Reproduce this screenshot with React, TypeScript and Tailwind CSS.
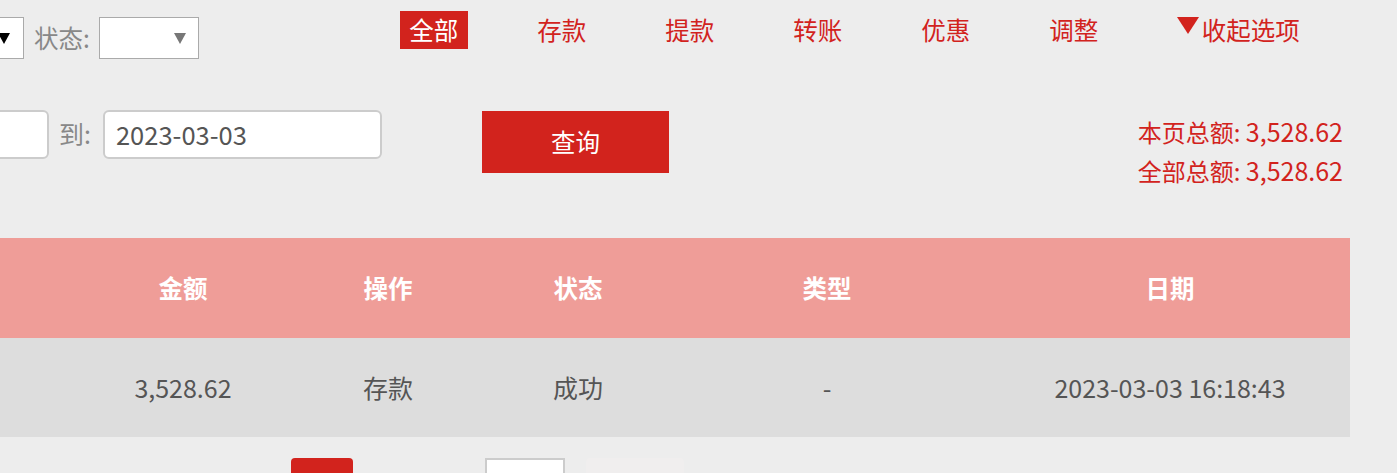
import React from 'react'

const font = { fontFamily: '"Microsoft YaHei", "Noto Sans CJK SC", "Noto Sans", sans-serif' }

const tabs = ['存款', '提款', '转账', '优惠', '调整']

const cols = [
  { w: 'w-[82px]', head: '', val: '' },
  { w: 'w-[202px]', head: '金额', val: '3,528.62' },
  { w: 'w-[208px]', head: '操作', val: '存款' },
  { w: 'w-[172px]', head: '状态', val: '成功' },
  { w: 'w-[326px]', head: '类型', val: '-' },
  { w: 'w-[360px]', head: '日期', val: '2023-03-03 16:18:43' },
]

function Arrow({ color }: { color: string }) {
  return (
    <svg width="12" height="11" viewBox="0 0 12 11">
      <path d="M0 0 H12 L6 11 Z" fill={color} />
    </svg>
  )
}

export default function App() {
  return (
    <div className="w-[1397px] h-[473px] bg-[#ededed] overflow-hidden text-[24px]" style={font}>
      {/* filters top row */}
      <div className="flex items-start h-[90px]">
        <div className="flex items-center mt-[17px]">
          <div className="ml-[-76px] w-[100px] h-[42px] bg-white border border-[#aaa] flex items-center justify-end pr-[13px]">
            <Arrow color="#000" />
          </div>
          <span className="ml-[10px] text-[#888] text-[24.5px] leading-none">状态:</span>
          <div className="ml-[9px] w-[100px] h-[42px] bg-white border border-[#aaa] flex items-center justify-end pr-[12px]">
            <Arrow color="#777" />
          </div>
        </div>
        <div className="flex items-center gap-[60px] ml-[201px] mt-[11px] text-[24.5px]">
          <div className="h-[38px] w-[68px] bg-[#d2231d] text-white flex items-center justify-center leading-none">全部</div>
          {tabs.map((t) => (
            <div key={t} className="h-[38px] w-[68px] text-[#d2231d] flex items-center justify-center leading-none">{t}</div>
          ))}
          <div className="h-[38px] px-[9px] text-[#d2231d] flex items-center leading-none">
            <svg width="22" height="17" viewBox="0 0 22 17" className="mr-[3px] mt-[-10px]">
              <path d="M0 0 H22 L11 17 Z" fill="#d2231d" />
            </svg>
            收起选项
          </div>
        </div>
      </div>

      {/* dates, query, totals */}
      <div className="flex items-start mt-[20px] h-[128px]">
        <div className="ml-[-60px] w-[109px] h-[49px] bg-white border-2 border-[#ccc] rounded-[6px]" />
        <span className="ml-[10px] mt-[8px] text-[#888] text-[25px] leading-[30px]">到:</span>
        <div className="ml-[12px] w-[279px] h-[49px] bg-white border-2 border-[#ccc] rounded-[6px] flex items-center pl-[11px] text-[#555] text-[25.5px]">
          2023-03-03
        </div>
        <button className="ml-[100px] mt-[1px] w-[187px] h-[62px] bg-[#d2231d] text-white text-[24.5px] flex items-center justify-center">
          查询
        </button>
        <div className="ml-auto mr-[54px] mt-[2px] text-right text-[#d2231d] text-[24px] leading-[39px]">
          <div>本页总额: <span className="text-[25px]">3,528.62</span></div>
          <div>全部总额: <span className="text-[25px]">3,528.62</span></div>
        </div>
      </div>

      {/* table */}
      <div className="w-[1350px]">
        <div className="flex h-[100px] bg-[#ef9d98] text-white font-bold text-[24.5px]">
          {cols.map((c, i) => (
            <div key={i} className={`${c.w} flex items-center justify-center`}>{c.head}</div>
          ))}
        </div>
        <div className="flex h-[99px] bg-[#dddddd] text-[#555] text-[25px]">
          {cols.map((c, i) => (
            <div key={i} className={`${c.w} flex items-center justify-center`}>{c.val}</div>
          ))}
        </div>
      </div>

      {/* pagination */}
      <div className="flex items-start mt-[21px]">
        <div className="ml-[291px] w-[62px] h-[30px] bg-[#d2231d] rounded-[4px]" />
        <div className="ml-[132px] w-[80px] h-[30px] bg-white border-2 border-[#ccc]" />
        <div className="ml-[21px] w-[98px] h-[30px] bg-[#f0eeee] rounded-[4px]" />
      </div>
    </div>
  )
}
